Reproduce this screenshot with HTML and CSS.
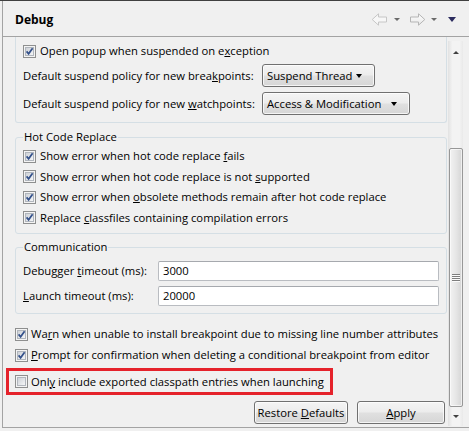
FILE: index.html
```html
<!DOCTYPE html>
<html>
<head>
<meta charset="utf-8">
<link rel="stylesheet" href="styles.css">
</head>
<body>
<svg class="defs" width="0" height="0">
  <defs>
    <linearGradient id="cbg" x1="0" y1="0" x2="1" y2="1">
      <stop offset="0" stop-color="#cbcfd5"/>
      <stop offset="1" stop-color="#f7f8f9"/>
    </linearGradient>
    <linearGradient id="fwdg" x1="0" y1="0" x2="0" y2="1">
      <stop offset="0" stop-color="#ffffff"/>
      <stop offset="1" stop-color="#e6e6e6"/>
    </linearGradient>
    <symbol id="cbon" viewBox="0 0 13 13">
      <rect x="0.5" y="0.5" width="12" height="12" fill="#f4f4f4" stroke="#8e8f8f"/>
      <rect x="2.5" y="2.5" width="8" height="8" fill="url(#cbg)" stroke="#b1b6bd"/>
      <path d="M3.6 6.4 L5.6 8.8 L9.6 3.2" fill="none" stroke="#33508a" stroke-width="1.7"/>
    </symbol>
    <symbol id="cboff" viewBox="0 0 13 13">
      <rect x="0.5" y="0.5" width="12" height="12" fill="#f4f4f4" stroke="#8e8f8f"/>
      <rect x="2.5" y="2.5" width="8" height="8" fill="url(#cbg)" stroke="#b1b6bd"/>
    </symbol>
  </defs>
</svg>
<div class="window">
  <div class="panel">
    <header class="head">
      <h1 class="title">Debug</h1>
      <div class="nav">
        <svg class="arr" width="17" height="13" viewBox="0 0 17 13"><path d="M1.2 6.5 L7.5 0.8 V4 H15.5 V9 H7.5 V12.2 Z" fill="#f7f7f7" stroke="#c6c6c6"/></svg>
        <span class="tri grey t1"></span>
        <svg class="arr" width="17" height="13" viewBox="0 0 17 13"><path d="M15.8 6.5 L9.5 0.8 V4 H1.5 V9 H9.5 V12.2 Z" fill="url(#fwdg)" stroke="#b5b5b5"/></svg>
        <span class="tri grey t2"></span>
        <span class="tri navy"></span>
      </div>
    </header>
    <div class="main">
      <div class="pane">
        <div class="group cut">
          <div class="row"><svg class="cb"><use href="#cbon"/></svg><span>Open popup when suspended on e<u>x</u>ception</span></div>
          <div class="frow first">
            <span class="flabel">Default suspend policy for new brea<u>k</u>points:</span>
            <span class="combo c1"><span>Suspend Thread</span><i class="dd"></i></span>
          </div>
          <div class="frow">
            <span class="flabel">Default suspend policy for new <u>w</u>atchpoints:</span>
            <span class="combo c2"><span>Access &amp; Modification</span><i class="dd"></i></span>
          </div>
        </div>

        <fieldset class="group hcr">
          <legend>Hot Code Replace</legend>
          <div class="row half"><svg class="cb"><use href="#cbon"/></svg><span>Show error when hot code replace <u>f</u>ails</span></div>
          <div class="row half"><svg class="cb"><use href="#cbon"/></svg><span>Show error when hot code replace is not <u>s</u>upported</span></div>
          <div class="row half"><svg class="cb"><use href="#cbon"/></svg><span>Show error when <u>o</u>bsolete methods remain after hot code replace</span></div>
          <div class="row half"><svg class="cb"><use href="#cbon"/></svg><span>Replace <u>c</u>lassfiles containing compilation errors</span></div>
        </fieldset>

        <fieldset class="group comm">
          <legend>Communication</legend>
          <div class="trow"><span>Debugger <u>t</u>imeout (ms):</span><span class="inp">3000</span></div>
          <div class="trow second"><span><u>L</u>aunch timeout (ms):</span><span class="inp">20000</span></div>
        </fieldset>

        <div class="row top warn"><svg class="cb"><use href="#cbon"/></svg><span>Wa<u>r</u>n when unable to install breakpoint due to missing line number attributes</span></div>
        <div class="row top prompt"><svg class="cb"><use href="#cbon"/></svg><span><u>P</u>rompt for confirmation when deleting a conditional breakpoint from editor</span></div>
        <div class="mark">
          <div class="row top inner"><svg class="cb"><use href="#cboff"/></svg><span>Onl<u>y</u> include exported classpath entries when launching</span></div>
        </div>

        <div class="buttons">
          <span class="btn restore"><span>Restore <u>D</u>efaults</span></span>
          <span class="btn apply"><span><u>A</u>pply</span></span>
        </div>
      </div>
      <div class="sb">
        <div class="sb-up"><i class="stri up"></i></div>
        <div class="sb-gap"></div>
        <div class="thumb"><i class="grip"></i></div>
        <div class="sb-down"><i class="stri down"></i></div>
      </div>
    </div>
  </div>
</div>
</body>
</html>
```
FILE: styles.css
```css
* { box-sizing: border-box; }
html, body { margin: 0; padding: 0; }
body {
  width: 469px;
  height: 431px;
  overflow: hidden;
  background: #f0f0f0;
  font-family: "Open Sans", "Noto Sans", sans-serif;
  font-size: 11.25px;
  line-height: 16px;
  color: #000;
}
.defs { position: absolute; width: 0; height: 0; }
u { text-decoration-thickness: 1px; text-underline-offset: 1px; }

.window {
  height: 431px;
  border-top: 1px solid #404040;
  padding-left: 2px;
}
.panel {
  height: 427px;
  border-left: 1px solid #a3a3a3;
  border-bottom: 1px solid #a3a3a3;
  display: flex;
  flex-direction: column;
}
.head {
  flex: none;
  height: 36px;
  border-bottom: 1px solid #a3a3a3;
  display: flex;
  align-items: center;
  padding-left: 12px;
}
.title {
  flex: 1;
  margin: 0;
  font-size: 12px;
  font-weight: 700;
  line-height: 16px;
  padding-top: 2px;
}
.nav {
  display: flex;
  align-items: center;
  padding-right: 13px;
  padding-top: 2px;
}
.arr { display: block; }
.tri {
  display: block;
  width: 0;
  height: 0;
  border-left: 3px solid transparent;
  border-right: 3px solid transparent;
  border-top: 3px solid #6a6a6a;
}
.tri.t1 { margin: 0 9px 0 6px; }
.tri.t2 { margin: 0 11px 0 5px; }
.tri.navy {
  border-left-width: 4.5px;
  border-right-width: 4.5px;
  border-top: 5px solid #2b2b5e;
}

.main {
  flex: 1;
  display: flex;
  min-height: 0;
}
.pane {
  flex: 1;
  padding-left: 12px;
  display: flex;
  flex-direction: column;
}

.group {
  margin: 0;
  min-width: 0;
  border: 1px solid #d5dfe5;
  border-radius: 3px;
  padding: 0 7px;
}
.group.cut {
  border-top: none;
  border-radius: 0 0 3px 3px;
  padding-top: 4px;
  padding-bottom: 7px;
}
legend {
  padding: 0 1px;
  margin-left: 0;
  line-height: 16px;
}
.group.hcr {
  margin-top: 6px;
  padding-top: 1px;
  padding-bottom: 5px;
}
.group.comm {
  margin-top: 5px;
  padding-top: 6px;
  padding-bottom: 7px;
}

.row {
  display: flex;
  align-items: center;
  height: 20px;
  gap: 4px;
  white-space: nowrap;
}
.row.half { height: 20.5px; }
.cb { width: 13px; height: 13px; flex: none; display: block; }

.frow {
  display: grid;
  grid-template-columns: 239px auto;
  align-items: center;
  margin-top: 5px;
  white-space: nowrap;
}
.frow.first { margin-top: 3px; }
.combo, .btn {
  height: 23px;
  border: 1px solid #707070;
  border-radius: 3px;
  background: linear-gradient(#f4f4f4 0%, #ececec 48%, #e0e0e0 52%, #d6d6d6 100%);
  box-shadow: inset 0 0 0 1px rgba(255, 255, 255, 0.75);
  display: flex;
  align-items: center;
  white-space: nowrap;
}
.combo { padding-left: 4px; }
.combo.c1 { width: 113px; }
.combo.c2 { width: 148px; }
.dd {
  margin-left: auto;
  margin-right: 12px;
  width: 0;
  height: 0;
  border-left: 3.5px solid transparent;
  border-right: 3.5px solid transparent;
  border-top: 4px solid #000;
}

.trow {
  display: grid;
  grid-template-columns: 135px 1fr;
  align-items: center;
  white-space: nowrap;
}
.trow.second { margin-top: 5px; }
.inp {
  height: 20px;
  background: #fff;
  border: 1px solid #b9bcc1;
  border-top-color: #a6a9ae;
  border-radius: 2px;
  padding-left: 4px;
  display: flex;
  align-items: center;
}

.row.top { gap: 3px; }
.warn { margin-top: 10px; }
.prompt { margin-top: 1px; }
.mark {
  margin-top: 3px;
  margin-left: -9px;
  width: 327px;
  height: 27px;
  border: 3px solid #e5222b;
  padding-left: 6px;
}
.row.inner { height: 21px; }

.buttons {
  margin-top: 6px;
  margin-right: 2px;
  display: flex;
  justify-content: flex-end;
  gap: 9px;
}
.btn { justify-content: center; }
.btn.restore { width: 94px; }
.btn.apply { width: 88px; }

.sb {
  flex: none;
  width: 15px;
  margin: 4px 6px 1px 1px;
  display: flex;
  flex-direction: column;
  background: linear-gradient(to right, #e6e6e6, #f3f3f3 25%, #f3f3f3 75%, #e9e9e9);
  border-left: 1px solid #e4e4e4;
}
.sb-up { height: 22px; display: flex; justify-content: center; align-items: center; }
.sb-gap { height: 85px; }
.thumb {
  height: 259px;
  border: 1px solid #979797;
  border-radius: 2px;
  background: linear-gradient(to right, #f2f2f2, #e6e6e6 50%, #d5d5d5);
  box-shadow: inset 0 0 0 1px rgba(255, 255, 255, 0.6);
  display: flex;
  justify-content: center;
  align-items: center;
}
.grip {
  display: block;
  width: 8px;
  height: 8px;
  background: repeating-linear-gradient(#7e7e7e 0 1px, #fbfbfb 1px 2px);
}
.sb-down { flex: 1; display: flex; justify-content: center; align-items: center; }
.stri {
  display: block;
  width: 0;
  height: 0;
  border-left: 3px solid transparent;
  border-right: 3px solid transparent;
}
.stri.up { border-bottom: 3px solid #404040; }
.stri.down { border-top: 3px solid #404040; }
```
